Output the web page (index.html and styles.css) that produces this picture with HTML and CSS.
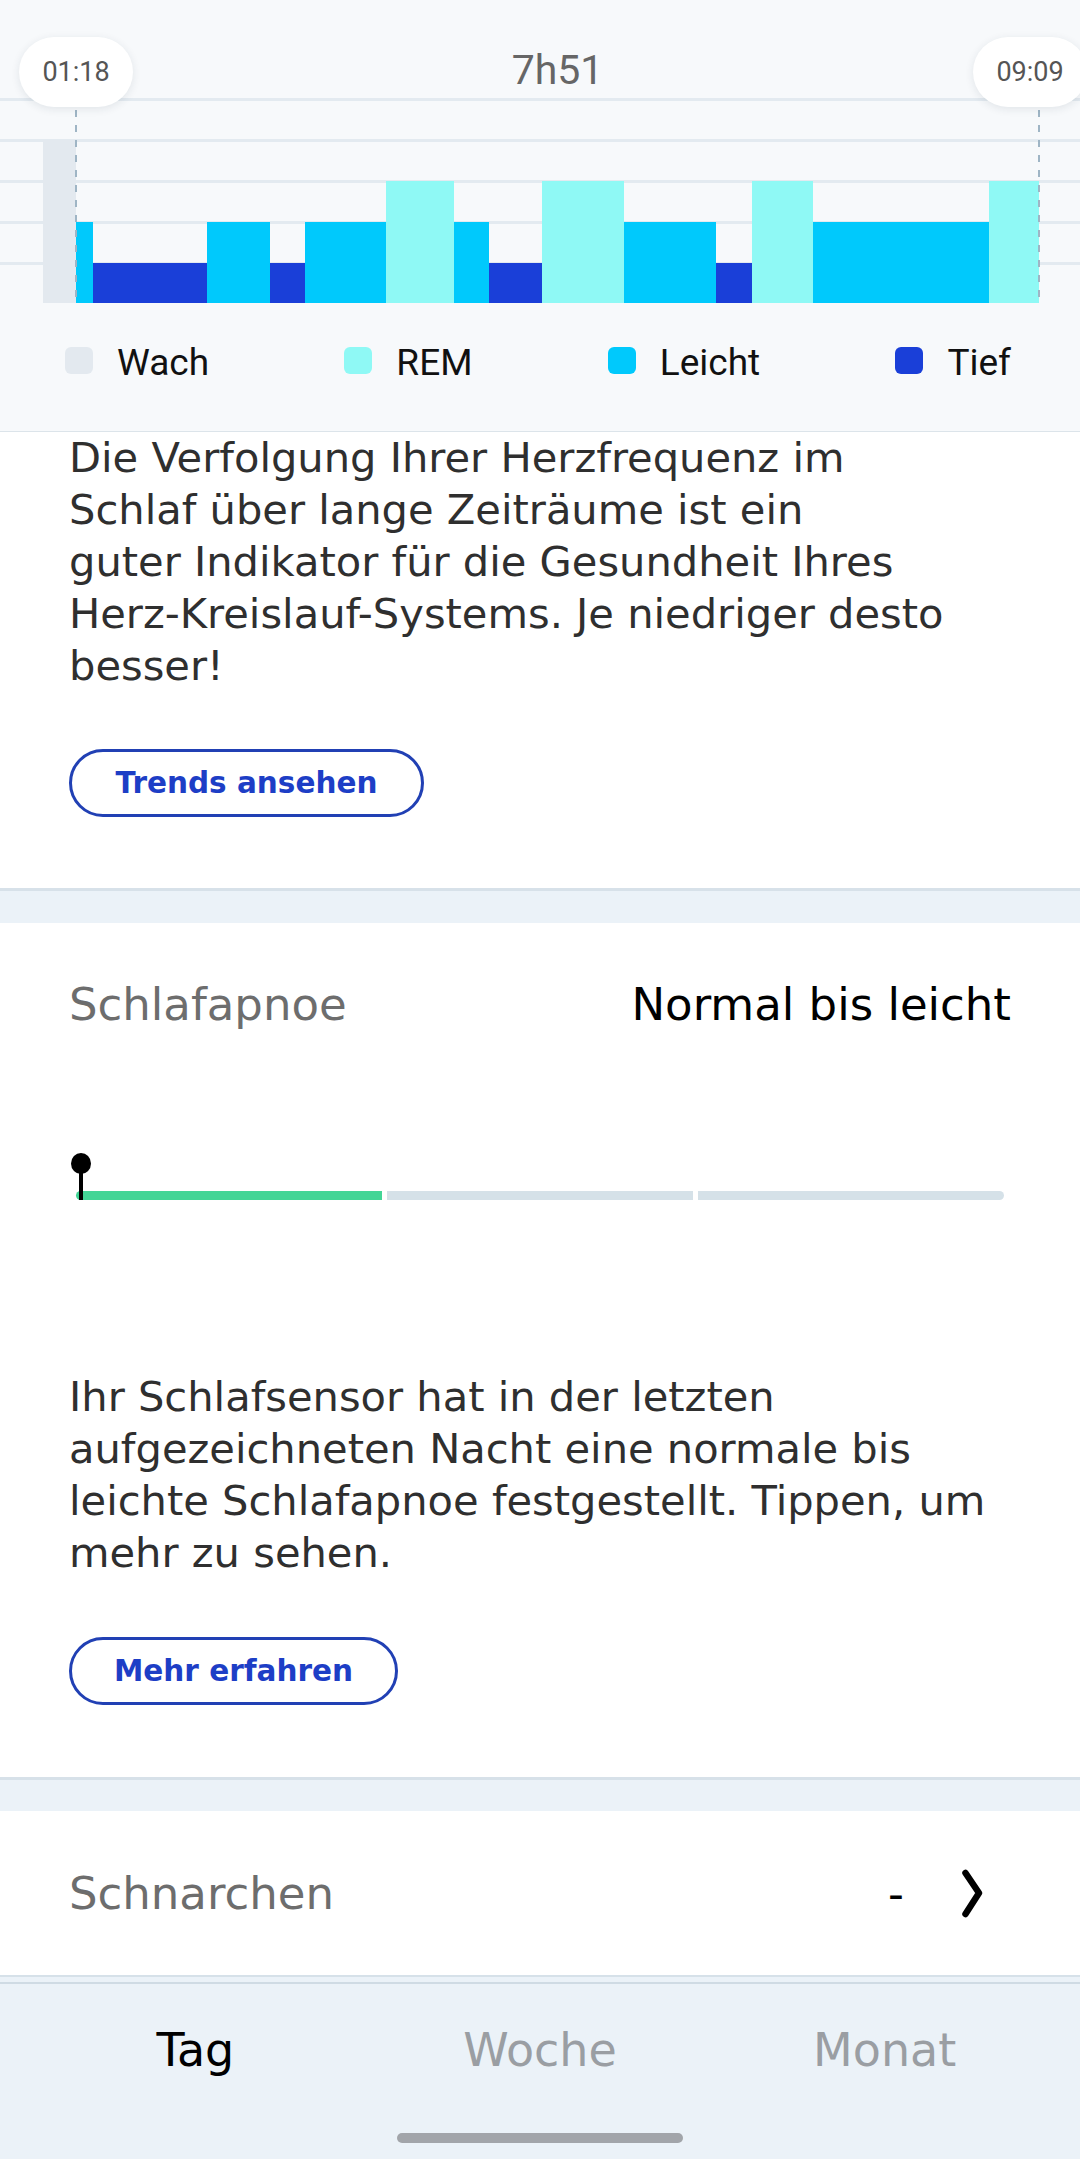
FILE: index.html
```html
<!DOCTYPE html>
<html lang="de">
<head>
<meta charset="utf-8">
<title>Schlaf</title>
<link rel="stylesheet" href="styles.css">
</head>
<body>
<div class="screen">
  <section class="chart-section">
    <div class="chart">
      <div class="gridline g1"></div>
      <div class="gridline g2"></div>
      <div class="gridline g3"></div>
      <div class="gridline g4"></div>
      <div class="gridline g5"></div>
      <div class="total">7h51</div>
      <div class="bars">
        <div class="bar wach" style="width:33px;height:163px"></div>
        <div class="bar leicht" style="width:17px;height:81px"></div>
        <div class="bar tief" style="width:114px;height:40px"></div>
        <div class="bar leicht" style="width:63px;height:81px"></div>
        <div class="bar tief" style="width:35px;height:40px"></div>
        <div class="bar leicht" style="width:81px;height:81px"></div>
        <div class="bar rem" style="width:68px;height:122px"></div>
        <div class="bar leicht" style="width:35px;height:81px"></div>
        <div class="bar tief" style="width:53px;height:40px"></div>
        <div class="bar rem" style="width:82px;height:122px"></div>
        <div class="bar leicht" style="width:92px;height:81px"></div>
        <div class="bar tief" style="width:36px;height:40px"></div>
        <div class="bar rem" style="width:61px;height:122px"></div>
        <div class="bar leicht" style="width:176px;height:81px"></div>
        <div class="bar rem" style="width:50px;height:122px"></div>
      </div>
      <div class="dash dash-start"></div>
      <div class="dash dash-end"></div>
      <div class="pill pill-start">01:18</div>
      <div class="pill pill-end">09:09</div>
    </div>
    <div class="legend">
      <div class="legend-item"><span class="swatch wach"></span><span class="legend-label">Wach</span></div>
      <div class="legend-item"><span class="swatch rem"></span><span class="legend-label">REM</span></div>
      <div class="legend-item"><span class="swatch leicht"></span><span class="legend-label">Leicht</span></div>
      <div class="legend-item"><span class="swatch tief"></span><span class="legend-label">Tief</span></div>
    </div>
  </section>

  <section class="card card-heart">
    <p class="body-text">Die Verfolgung Ihrer Herzfrequenz im<br>Schlaf über lange Zeiträume ist ein<br>guter Indikator für die Gesundheit Ihres<br>Herz-Kreislauf-Systems. Je niedriger desto<br>besser!</p>
    <button class="outline-btn btn-trends">Trends ansehen</button>
  </section>

  <div class="band"></div>

  <section class="card card-apnea">
    <div class="row-head">
      <span class="label">Schlafapnoe</span>
      <span class="value-strong">Normal bis leicht</span>
    </div>
    <div class="slider">
      <div class="track">
        <span class="seg seg-active"></span>
        <span class="seg"></span>
        <span class="seg"></span>
      </div>
      <div class="marker"><span class="marker-head"></span><span class="marker-stem"></span></div>
    </div>
    <p class="body-text apnea-text">Ihr Schlafsensor hat in der letzten<br>aufgezeichneten Nacht eine normale bis<br>leichte Schlafapnoe festgestellt. Tippen, um<br>mehr zu sehen.</p>
    <button class="outline-btn btn-more">Mehr erfahren</button>
  </section>

  <div class="band band-2"></div>

  <section class="card card-snore">
    <span class="label">Schnarchen</span>
    <div class="snore-right">
      <span class="snore-value">-</span>
      <svg class="chevron" width="30" height="50" viewBox="0 0 30 50"><path d="M5.5 5 L19 25 L5.5 46" fill="none" stroke="#000" stroke-width="6.5" stroke-linecap="round" stroke-linejoin="round"/></svg>
    </div>
  </section>

  <nav class="nav">
    <div class="tabs">
      <span class="tab tab-active">Tag</span>
      <span class="tab">Woche</span>
      <span class="tab">Monat</span>
    </div>
    <div class="home-indicator"></div>
  </nav>
</div>
</body>
</html>
```

FILE: styles.css
```css
html, body {
  margin: 0;
  padding: 0;
  background: #ebf2f8;
}
.screen {
  width: 1080px;
  height: 2159px;
  overflow: hidden;
  font-family: "DejaVu Sans", sans-serif;
}

/* ---------- chart ---------- */
.chart-section {
  height: 434px;
  box-sizing: border-box;
  background: #f7f9fb;
  border-bottom: 3px solid #dce4ea;
}
.chart {
  position: relative;
  height: 303px;
}
.gridline {
  position: absolute;
  left: 0;
  right: 0;
  height: 3px;
  background: #e3eaf0;
}
.g1 { top: 98px; }
.g2 { top: 139px; }
.g3 { top: 180px; }
.g4 { top: 221px; }
.g5 { top: 262px; }
.total {
  margin: 0 41px 0 76px;
  padding-top: 46px;
  text-align: center;
  font-family: Roboto, sans-serif;
  font-size: 41px;
  line-height: 48px;
  color: #666;
  font-weight: 400;
}
.bars {
  position: absolute;
  left: 43px;
  bottom: 0;
  display: flex;
  align-items: flex-end;
}
.bar { flex: none; }
.wach { background: #e3e9ef; }
.rem { background: #8ff9f5; }
.leicht { background: #00c9fc; }
.tief { background: #1a3fd8; }
.dash {
  position: absolute;
  top: 110px;
  bottom: 0;
  width: 2px;
  background: repeating-linear-gradient(to bottom, #9fb5c5 0 7px, transparent 7px 15px);
}
.dash-start { left: 75px; }
.dash-end { left: 1038px; }
.pill {
  position: absolute;
  top: 37px;
  width: 114px;
  height: 70px;
  border-radius: 35px;
  background: #fff;
  box-shadow: 0 2px 8px rgba(30, 50, 70, 0.10);
  display: flex;
  align-items: center;
  justify-content: center;
  font-family: Roboto, sans-serif;
  font-size: 27px;
  color: #555;
}
.pill-start { left: 19px; }
.pill-end { left: 973px; }

.legend {
  margin-top: 43px;
  padding: 0 69px 0 65px;
  display: flex;
  justify-content: space-between;
  align-items: center;
}
.legend-item {
  display: flex;
  align-items: center;
  height: 28px;
}
.swatch {
  width: 28px;
  height: 27px;
  border-radius: 6px;
  margin-right: 24px;
}
.legend-label {
  font-family: Roboto, sans-serif;
  font-size: 37px;
  line-height: 28px;
  color: #111;
  position: relative;
  top: 3px;
}

/* ---------- cards ---------- */
.card {
  background: #fff;
  padding: 0 69px;
}
.body-text {
  margin: 0;
  font-size: 41.6px;
  line-height: 52px;
  color: #2f2f2f;
  white-space: nowrap;
}
.card-heart {
  padding-bottom: 71px;
}
.card-heart .body-text {
  margin-top: -2px;
}
.outline-btn {
  display: block;
  box-sizing: border-box;
  height: 68px;
  border: 3px solid #2140b4;
  border-radius: 34px;
  background: #fff;
  color: #1d3ec6;
  font-family: "DejaVu Sans", sans-serif;
  font-weight: bold;
  font-size: 29.5px;
  padding: 0;
  text-align: center;
  white-space: nowrap;
}
.btn-trends {
  margin-top: 57px;
  width: 355px;
}
.btn-more {
  margin-top: 58px;
  width: 329px;
}
.band {
  height: 35px;
  box-sizing: border-box;
  background: #ebf2f8;
  border-top: 3px solid #d7e1e9;
}
.band-2 { height: 34px; }

.card-apnea {
  padding-top: 56px;
  padding-bottom: 72px;
}
.row-head {
  display: flex;
  justify-content: space-between;
  align-items: baseline;
  line-height: 52px;
}
.label {
  font-size: 45px;
  color: #6d6d6d;
}
.value-strong {
  font-size: 45px;
  color: #000;
}
.slider {
  position: relative;
  height: 47px;
  margin: 122px 7px 0 7px;
}
.track {
  position: absolute;
  left: 0;
  right: 0;
  bottom: 0;
  height: 9px;
  display: flex;
  gap: 5px;
}
.seg {
  flex: 1;
  background: #d5e1e8;
}
.seg:first-child { border-radius: 5px 0 0 5px; }
.seg:last-child { border-radius: 0 5px 5px 0; }
.seg-active { background: #43d596; }
.marker {
  position: absolute;
  left: -5px;
  top: 0;
  width: 20px;
  height: 47px;
}
.marker-head {
  position: absolute;
  left: 0;
  top: 0;
  width: 20px;
  height: 21px;
  border-radius: 50%;
  background: #000;
}
.marker-stem {
  position: absolute;
  left: 8px;
  top: 15px;
  width: 4px;
  height: 32px;
  background: #000;
}
.apnea-text {
  margin-top: 171px;
}

.card-snore {
  height: 164px;
  display: flex;
  align-items: center;
  justify-content: space-between;
  padding-right: 90px;
}
.snore-right {
  display: flex;
  align-items: center;
}
.snore-value {
  font-size: 44px;
  color: #000;
  margin-right: 56px;
}
.chevron { display: block; }

/* ---------- nav ---------- */
.nav {
  border-top: 2px solid #d6e1e9;
  padding-top: 5px;
  background: #ebf2f8;
}
.tabs {
  border-top: 2px solid #cfdbe4;
  padding: 36px 23px 0;
  display: grid;
  grid-template-columns: repeat(3, 1fr);
  text-align: center;
  font-size: 46px;
  line-height: 60px;
}
.tab { color: #9a9ea3; }
.tab-active { color: #000; }
.home-indicator {
  width: 286px;
  height: 10px;
  border-radius: 5px;
  background: #a2a5aa;
  margin: 53px auto 0;
}
```
